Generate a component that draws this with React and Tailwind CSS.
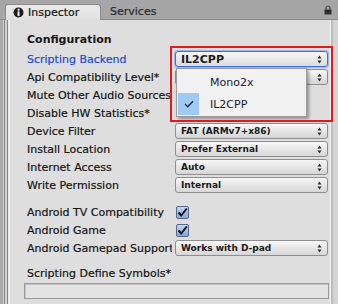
import React from "react";

const Arrows = () => (
  <svg width="5" height="9" viewBox="0 0 5 9" className="shrink-0">
    <path d="M2.5 0.5 L4.5 3.5 H0.5Z M2.5 8.5 L4.5 5.5 H0.5Z" fill="#2a2a2a" />
  </svg>
);

function Dropdown({ text, focus }) {
  return (
    <div
      className={
        focus
          ? "w-[153px] h-[16px] rounded-[3px] border border-[#3e6fe0] shadow-[0_0_0_1px_#9db6ee] bg-linear-to-b from-[#f7f7f7] to-[#dcdcdc] flex items-center pl-[5px] pr-[5px]"
          : "w-[153px] h-[16px] rounded-[3px] border border-[#8e8e8e] bg-linear-to-b from-[#f7f7f7] to-[#d6d6d6] flex items-center pl-[5px] pr-[5px]"
      }
    >
      <span
        className={
          focus
            ? "flex-1 font-bold text-[11px] text-[#1a1a1a] leading-none whitespace-nowrap overflow-hidden"
            : "flex-1 font-bold text-[9px] text-[#1a1a1a] leading-none whitespace-nowrap overflow-hidden"
        }
      >
        {text}
      </span>
      <Arrows />
    </div>
  );
}

function Checkbox() {
  return (
    <div className="ml-[1px] w-[13px] h-[13px] rounded-[2px] border border-[#56698a] bg-linear-to-b from-[#c3d6f2] to-[#86a9dc] flex items-center justify-center">
      <svg width="11" height="11" viewBox="0 0 11 11">
        <path d="M1.5 5.5 L4.2 8.5 L9.8 1.5" fill="none" stroke="#111" strokeWidth="2" />
      </svg>
    </div>
  );
}

function Row({ label, blue, children }) {
  return (
    <div className="h-[18px] flex items-center">
      <div
        className={
          blue
            ? "w-[145px] shrink-0 overflow-hidden whitespace-nowrap text-[#1d48d6] [-webkit-text-stroke:0.2px_#1d48d6]"
            : "w-[145px] shrink-0 overflow-hidden whitespace-nowrap text-[#151515] [-webkit-text-stroke:0.2px_#151515]"
        }
      >
        {label}
      </div>
      <div className="ml-[3px] flex items-center">{children}</div>
    </div>
  );
}

export default function App() {
  return (
    <div className="relative w-[338px] h-[304px] overflow-hidden bg-[#dedede] font-['DejaVu_Sans',sans-serif] text-[11px] leading-none">
      {/* tab bar */}
      <div className="h-[20px] bg-[#a6a6a6] border-b border-[#8a8a8a] flex items-end">
        <div className="relative z-10 ml-[5px] w-[96px] h-[16px] -mb-px rounded-t-[3px] border border-b-0 border-[#8a8a8a] bg-linear-to-b from-[#ececec] to-[#e0e0e0] flex items-center pl-[7px]">
          <svg width="11" height="11" viewBox="0 0 11 11" className="shrink-0">
            <circle cx="5.5" cy="5.5" r="5" fill="#1b1b1b" />
            <rect x="4.6" y="1.8" width="1.9" height="1.9" fill="#fff" />
            <rect x="4.6" y="4.5" width="1.9" height="4.6" fill="#fff" />
          </svg>
          <span className="ml-[4px] text-[#151515] [-webkit-text-stroke:0.2px_#151515]">Inspector</span>
        </div>
        <div className="ml-[9px] h-[16px] flex items-center text-[#2a2a2a] [-webkit-text-stroke:0.2px_#2a2a2a]">Services</div>
        <div className="ml-auto mr-[6px] h-[18px] flex items-center">
          <svg width="8" height="10" viewBox="0 0 8 10">
            <path d="M2 4.5 V3 A2 2 0 0 1 6 3 V4.5" fill="none" stroke="#4a4a4a" strokeWidth="1.2" />
            <rect x="0.5" y="4.5" width="7" height="5" fill="#2e2e2e" />
          </svg>
        </div>
      </div>

      {/* body */}
      <div className="flex h-[284px]">
        <div className="flex w-[10px] shrink-0">
          <div className="w-[3px] bg-[#a9a9a9]" />
          <div className="w-[1px] bg-[#cdcdcd]" />
          <div className="w-[1px] bg-[#858585]" />
          <div className="w-[2px] bg-[#d2d2d2]" />
          <div className="w-[1px] bg-[#858585]" />
          <div className="w-[2px] bg-[#ececec]" />
        </div>
        <div className="w-[320px] shrink-0 pl-[17px] pt-[10px] flex flex-col">
          <div className="h-[18px] flex items-center font-bold text-[#151515]">Configuration</div>
          <div className="mt-[2px]">
            <Row label="Scripting Backend" blue>
              <Dropdown text="IL2CPP" focus />
            </Row>
          </div>
          <Row label="Api Compatibility Level*">
            <Dropdown text="" />
          </Row>
          <Row label="Mute Other Audio Sources">
            <div />
          </Row>
          <Row label="Disable HW Statistics*">
            <div />
          </Row>
          <Row label="Device Filter">
            <Dropdown text="FAT (ARMv7+x86)" />
          </Row>
          <Row label="Install Location">
            <Dropdown text="Prefer External" />
          </Row>
          <Row label="Internet Access">
            <Dropdown text="Auto" />
          </Row>
          <Row label="Write Permission">
            <Dropdown text="Internal" />
          </Row>
          <div className="mt-[9px]">
            <Row label="Android TV Compatibility">
              <Checkbox />
            </Row>
          </div>
          <Row label="Android Game">
            <Checkbox />
          </Row>
          <Row label="Android Gamepad Support Level">
            <Dropdown text="Works with D-pad" />
          </Row>
          <div className="mt-[7px] h-[18px] flex items-center text-[#151515] [-webkit-text-stroke:0.2px_#151515]">Scripting Define Symbols*</div>
          <div className="mt-[1px] -ml-[3px] w-[305px] h-[16px] border border-[#9a9a9a] bg-[#e3e3e3] shadow-[inset_1px_1px_0_#c4c4c4]" />
        </div>
        <div className="flex flex-1">
          <div className="w-[1px] bg-[#f2f2f2]" />
          <div className="w-[2px] bg-[#bdbdbd]" />
          <div className="flex-1 bg-[#d4d4d4]" />
        </div>
      </div>

      {/* popup menu */}
      <div className="absolute left-[176px] top-[68px] w-[131px] h-[49px] bg-[#f1f1f1] border border-[#9c9c9c] shadow-[2px_2px_3px_rgba(0,0,0,0.35)] pt-[3px] flex flex-col z-20">
        <div className="h-[21px] flex items-center pl-[33px] text-[#1c1c2c]">Mono2x</div>
        <div className="h-[22px] flex items-center">
          <div className="ml-[1px] w-[21px] h-[22px] bg-[#9ecbf6] flex items-center justify-center">
            <svg width="10" height="8" viewBox="0 0 10 8">
              <path d="M1 4 L3.8 6.8 L9 1.2" fill="none" stroke="#1f2a3a" strokeWidth="1.4" />
            </svg>
          </div>
          <span className="ml-[11px] text-[#1c1c2c]">IL2CPP</span>
        </div>
      </div>

      {/* red highlight */}
      <div className="absolute left-[170px] top-[46px] w-[163px] h-[76px] border-2 border-[#e3191c] z-30" />
    </div>
  );
}
